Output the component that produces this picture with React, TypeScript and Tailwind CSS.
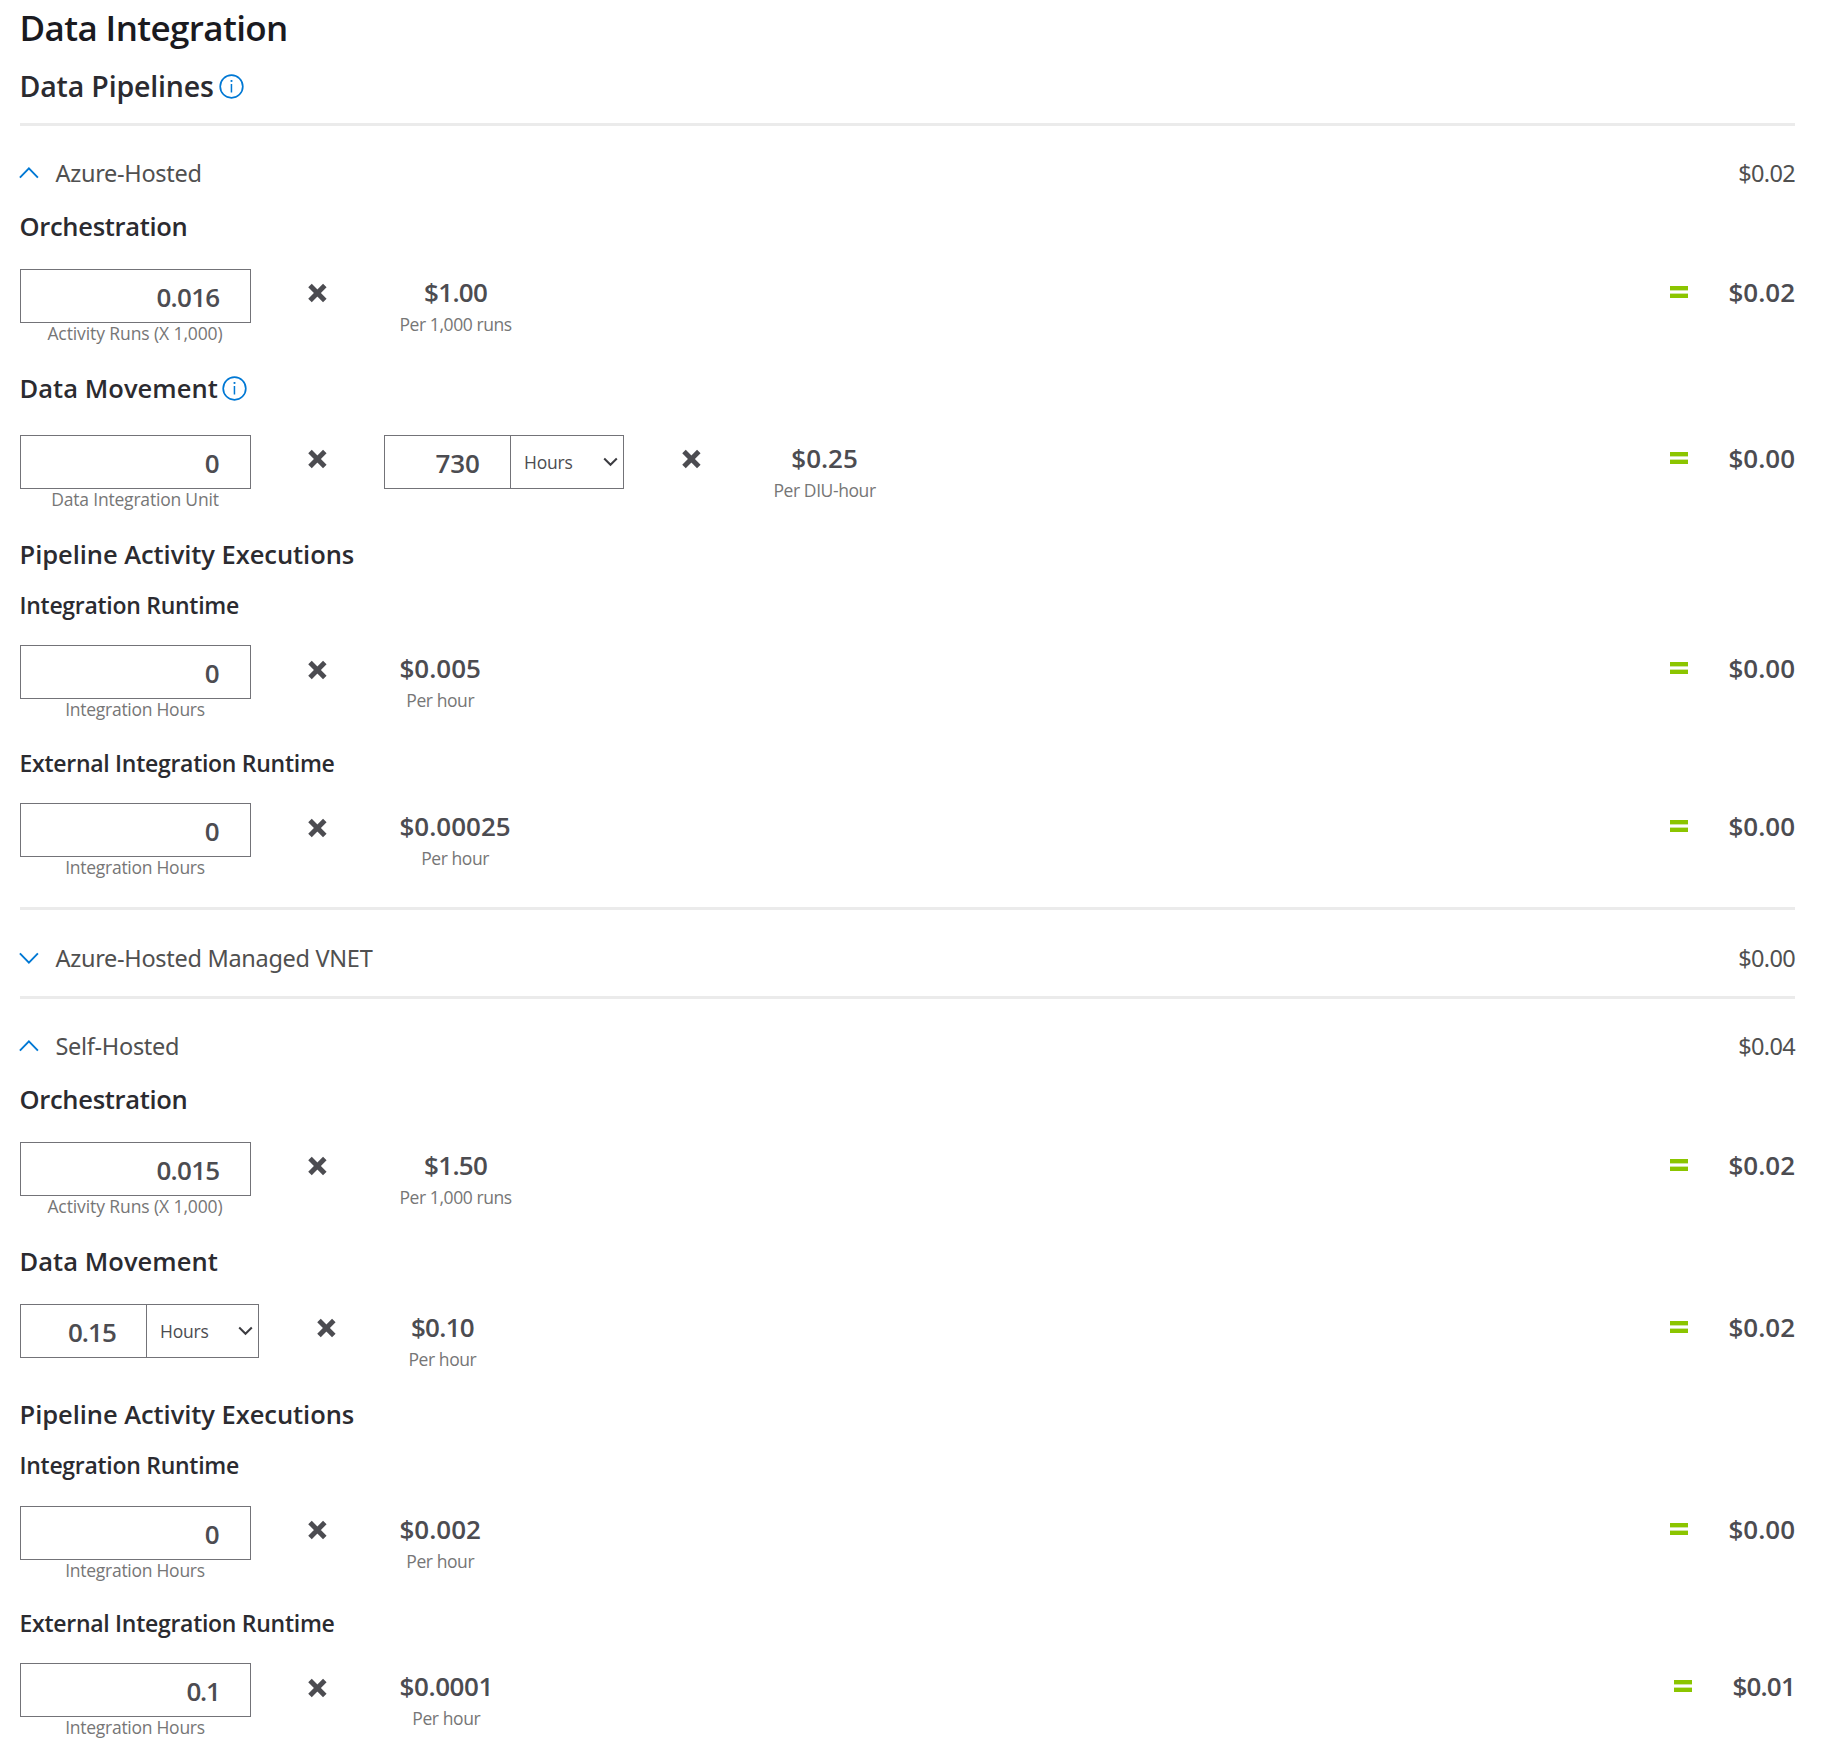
import React from "react";

const noto = "font-['Noto_Sans','Open_Sans',sans-serif]";
const open = "font-['Open_Sans','Noto_Sans',sans-serif]";

function InfoIcon() {
  return (
    <svg width="25" height="25" viewBox="0 0 25 25" fill="none" className="shrink-0">
      <circle cx="12.5" cy="12.5" r="11.3" stroke="#0078d4" strokeWidth="1.7" />
      <rect x="11.7" y="10" width="1.5" height="8.5" fill="#0078d4" />
      <rect x="11.6" y="6" width="1.8" height="1.9" fill="#0078d4" />
    </svg>
  );
}

function Chevron({ open: isOpen }: { open: boolean }) {
  return (
    <svg width="20" height="12" viewBox="0 0 20 12" fill="none" stroke="#0078d4" strokeWidth="1.9" className="shrink-0">
      <path d={isOpen ? "M0.9 10.6 L9.9 1.4 L18.9 10.6" : "M0.9 1.4 L9.9 10.6 L18.9 1.4"} />
    </svg>
  );
}

function Times({ low }: { low?: boolean }) {
  return (
    <svg
      width="18"
      height="18"
      viewBox="0 0 18 18"
      stroke="#4c4c51"
      strokeWidth="5"
      className={`shrink-0 overflow-visible ${low ? "mt-4" : "mt-[15px]"}`}
    >
      <path d="M2 1.6 L16.8 16.4 M16.8 1.6 L2 16.4" />
    </svg>
  );
}

function Equals() {
  return (
    <div className="mt-[17px] flex w-[18px] flex-col">
      <div className="h-1 bg-[#8bc500]" />
      <div className="h-1 border-y border-[#cfe6a0]" />
      <div className="h-1 bg-[#8bc500]" />
    </div>
  );
}

function Section({ title, price, isOpen, className }: { title: string; price: string; isOpen: boolean; className: string }) {
  return (
    <div className={`flex h-11 items-center text-[23.5px] leading-[44px] text-[#505050] ${noto} ${className}`}>
      <div className="-ml-px mr-[16.5px]">
        <Chevron open={isOpen} />
      </div>
      <span className="tracking-[-0.3px]">{title}</span>
      <span className="ml-auto tracking-[-0.68px]">{price}</span>
    </div>
  );
}

function Heading({ children, info, className }: { children: string; info?: boolean; className: string }) {
  return (
    <h3 className={`-ml-[0.5px] flex h-9 items-center gap-[4.5px] text-[25.5px] leading-9 font-semibold text-[#2b2b30] ${open} ${className}`}>
      {children}
      {info && <InfoIcon />}
    </h3>
  );
}

function SubHeading({ children, className }: { children: string; className: string }) {
  return (
    <h4 className={`-ml-[0.5px] h-8 text-[23px] leading-8 font-semibold tracking-[-0.28px] text-[#2b2b30] ${open} ${className}`}>{children}</h4>
  );
}

const numberText = `text-[26px] font-semibold text-[#4c4c51] ${open}`;
const labelText = `h-[22px] text-center text-[17.5px] leading-[22px] whitespace-nowrap text-[#767676] ${open}`;

function Field({ value, label, tracking = "", labelClass }: { value: string; label: string; tracking?: string; labelClass: string }) {
  return (
    <div className="w-[231px] shrink-0">
      <div className={`h-[54px] border border-[#737378] pt-px pr-[30.5px] text-right leading-[52px] ${numberText} ${tracking}`}>
        {value}
      </div>
      <div className={`-mt-px pr-px ${labelText} ${labelClass}`}>{label}</div>
    </div>
  );
}

function HoursField({ value, tracking = "", width }: { value: string; tracking?: string; width: string }) {
  return (
    <div className={`flex h-[54px] shrink-0 border border-[#737378] ${width}`}>
      <div className={`w-[126px] border-r border-[#737378] pt-px pr-[30px] text-right leading-[52px] ${numberText} ${tracking}`}>
        {value}
      </div>
      <div className={`flex flex-1 items-center justify-between pr-[5.5px] pl-[13px] text-[17.5px] leading-[52px] tracking-[-0.2px] text-[#4c4c51] ${open}`}>
        Hours
        <svg width="15" height="10" viewBox="0 0 15 10" fill="none" stroke="#3c3c41" strokeWidth="2">
          <path d="M1.2 1.5 L7.5 7.8 L13.8 1.5" />
        </svg>
      </div>
    </div>
  );
}

function Price({ value, label, tracking = "" }: { value: string; label: string; tracking?: string }) {
  return (
    <div className="ml-[73.5px] pt-[7px] text-center">
      <div className={`h-8 leading-8 ${numberText} ${tracking}`}>{value}</div>
      <div className={`mt-[5px] tracking-[-0.42px] ${labelText}`}>{label}</div>
    </div>
  );
}

function Total({ value, tracking = "" }: { value: string; tracking?: string }) {
  return (
    <div className="ml-auto flex">
      <Equals />
      <div className={`ml-10 pt-[7px] leading-8 ${numberText} ${tracking}`}>{value}</div>
    </div>
  );
}

function Row({ className, children }: { className: string; children: React.ReactNode }) {
  return <div className={`flex items-start ${className}`}>{children}</div>;
}

function Rule({ className }: { className: string }) {
  return <div className={`h-[3px] bg-[#ebebeb] ${className}`} />;
}

export default function App() {
  return (
    <main className="h-[1763px] w-[1822px] overflow-hidden bg-white pr-[27px] pl-5">
      <h1 className={`-ml-[0.5px] h-[55px] text-[35px] leading-[55px] font-semibold tracking-[-0.62px] text-[#1a1a1f] ${open}`}>Data Integration</h1>
      <h2 className={`-ml-[0.5px] mt-[13px] flex h-9 items-center gap-[5px] text-[28.5px] leading-9 font-semibold tracking-[-0.17px] text-[#2b2b30] ${open}`}>
        Data Pipelines
        <InfoIcon />
      </h2>
      <Rule className="mt-[19px]" />

      <Section title="Azure-Hosted" price="$0.02" isOpen className="mt-[25px]" />
      <Heading className="mt-[13px] tracking-[-0.3px]">Orchestration</Heading>
      <Row className="mt-[25px] h-[101px]">
        <Field value="0.016" label="Activity Runs (X 1,000)" tracking="tracking-[-0.7px]" labelClass="tracking-[-0.1px]" />
        <div className="w-[57px] shrink-0" />
        <Times />
        <Price value="$1.00" label="Per 1,000 runs" tracking="tracking-[-0.7px]" />
        <Total value="$0.02" />
      </Row>
      <Heading className="tracking-[0.05px]" info>Data Movement</Heading>
      <Row className="mt-[29px] h-[101px]">
        <Field value="0" label="Data Integration Unit" labelClass="tracking-[-0.2px]" />
        <div className="w-[57px] shrink-0" />
        <Times />
        <div className="w-[58px] shrink-0" />
        <HoursField value="730" width="w-[240px]" />
        <div className="w-[58px] shrink-0" />
        <Times />
        <Price value="$0.25" label="Per DIU-hour" />
        <Total value="$0.00" />
      </Row>
      <Heading className="tracking-[-0.05px]">Pipeline Activity Executions</Heading>
      <SubHeading className="mt-[17px]">Integration Runtime</SubHeading>
      <Row className="mt-6 h-[102px]">
        <Field value="0" label="Integration Hours" labelClass="tracking-[-0.27px]" />
        <div className="w-[57px] shrink-0" />
        <Times low />
        <Price value="$0.005" label="Per hour" />
        <Total value="$0.00" />
      </Row>
      <SubHeading className="">External Integration Runtime</SubHeading>
      <Row className="mt-6 h-[104px]">
        <Field value="0" label="Integration Hours" labelClass="tracking-[-0.27px]" />
        <div className="w-[57px] shrink-0" />
        <Times low />
        <Price value="$0.00025" label="Per hour" />
        <Total value="$0.00" />
      </Row>
      <Rule className="" />

      <Section title="Azure-Hosted Managed VNET" price="$0.00" isOpen={false} className="mt-[26px]" />
      <Rule className="mt-4" />

      <Section title="Self-Hosted" price="$0.04" isOpen className="mt-[25px]" />
      <Heading className="mt-[13px] tracking-[-0.3px]">Orchestration</Heading>
      <Row className="mt-[25px] h-[101px]">
        <Field value="0.015" label="Activity Runs (X 1,000)" tracking="tracking-[-0.7px]" labelClass="tracking-[-0.1px]" />
        <div className="w-[57px] shrink-0" />
        <Times />
        <Price value="$1.50" label="Per 1,000 runs" tracking="tracking-[-0.7px]" />
        <Total value="$0.02" />
      </Row>
      <Heading className="tracking-[0.05px]">Data Movement</Heading>
      <Row className="mt-[25px] h-[92px]">
        <HoursField value="0.15" tracking="tracking-[-0.9px]" width="w-[239px]" />
        <div className="w-[58px] shrink-0" />
        <Times />
        <Price value="$0.10" label="Per hour" tracking="tracking-[-0.7px]" />
        <Total value="$0.02" />
      </Row>
      <Heading className="tracking-[-0.05px]">Pipeline Activity Executions</Heading>
      <SubHeading className="mt-[17px]">Integration Runtime</SubHeading>
      <Row className="mt-[25px] h-[101px]">
        <Field value="0" label="Integration Hours" labelClass="tracking-[-0.27px]" />
        <div className="w-[57px] shrink-0" />
        <Times />
        <Price value="$0.002" label="Per hour" />
        <Total value="$0.00" />
      </Row>
      <SubHeading className="">External Integration Runtime</SubHeading>
      <Row className="mt-6 h-[100px]">
        <Field value="0.1" label="Integration Hours" tracking="tracking-[-1.3px]" labelClass="tracking-[-0.27px]" />
        <div className="w-[57px] shrink-0" />
        <Times low />
        <Price value="$0.0001" label="Per hour" tracking="tracking-[-0.4px]" />
        <Total value="$0.01" tracking="tracking-[-0.8px]" />
      </Row>
    </main>
  );
}
